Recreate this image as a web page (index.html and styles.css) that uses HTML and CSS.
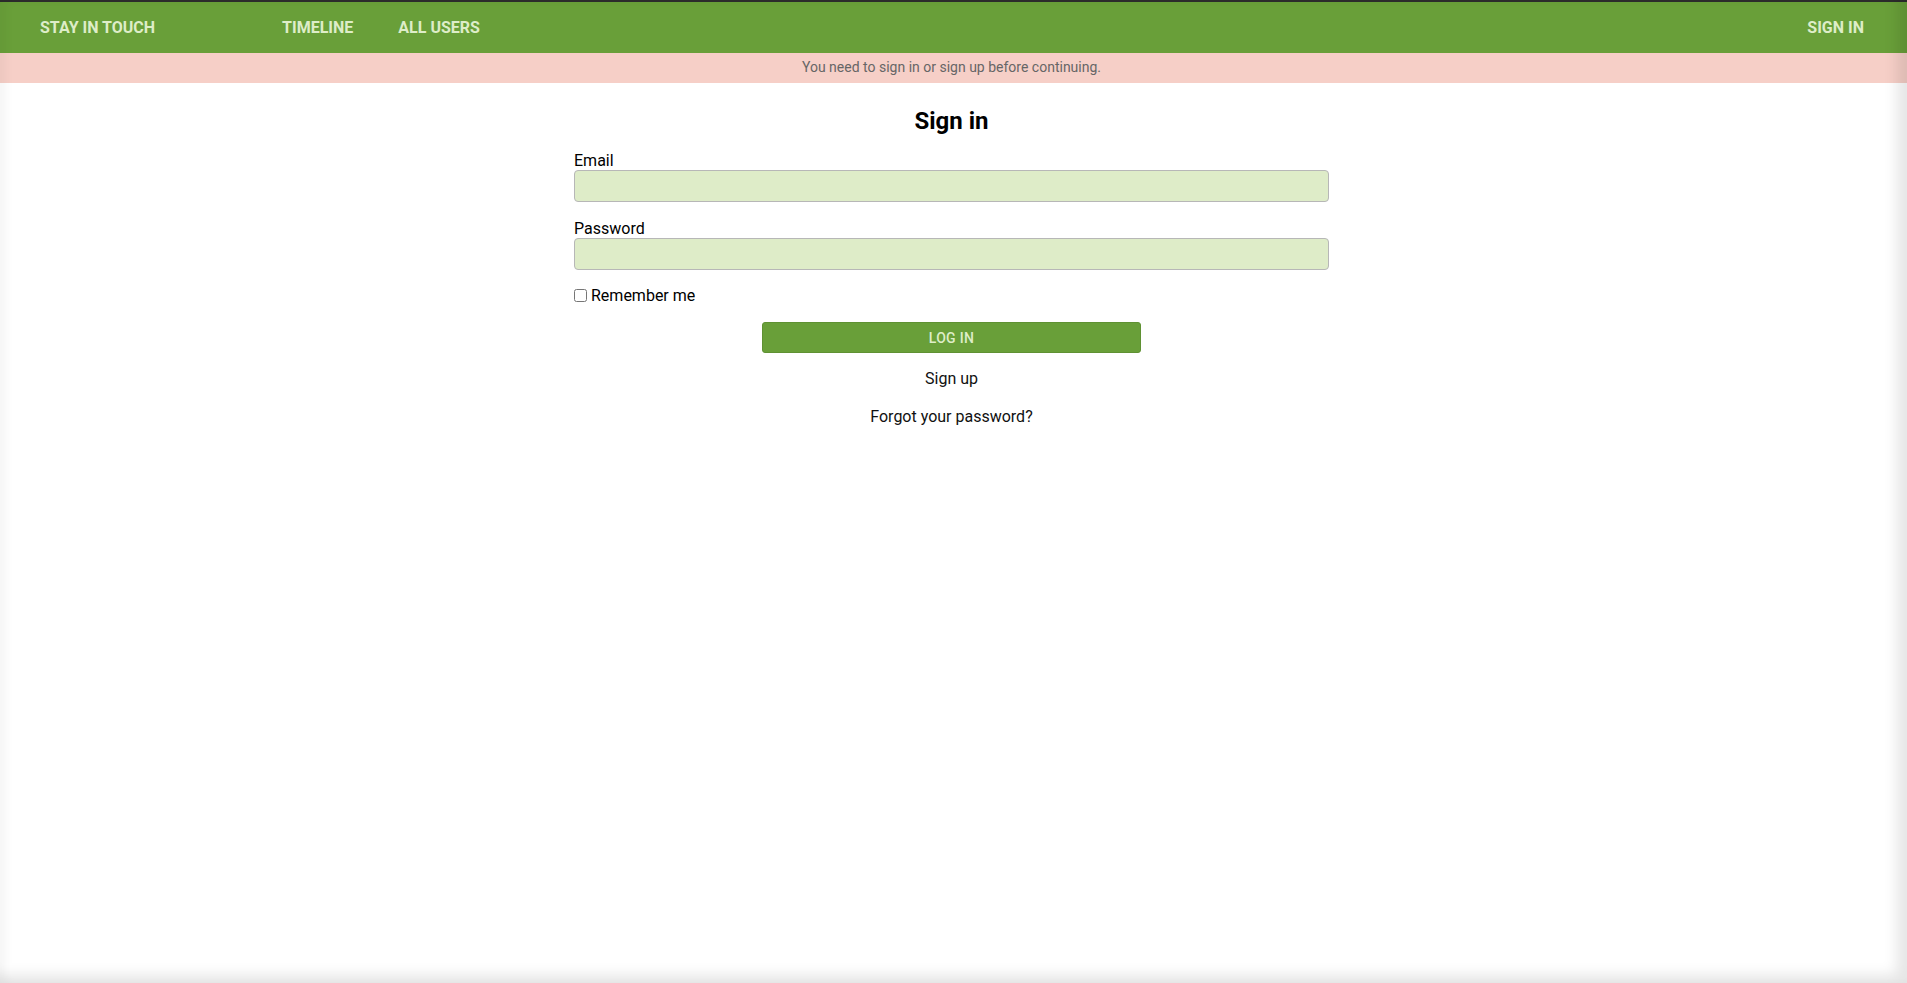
FILE: index.html
```html
<!DOCTYPE html>
<html lang="en">
<head>
<meta charset="utf-8">
<title>Stay in Touch - Sign in</title>
<link rel="stylesheet" href="styles.css">
</head>
<body>
<div class="page">
  <header class="topbar">
    <a class="brand" href="#">STAY IN TOUCH</a>
    <nav class="main-nav">
      <a href="#">TIMELINE</a>
      <a href="#">ALL USERS</a>
    </nav>
    <a class="signin-link" href="#">SIGN IN</a>
  </header>
  <div class="content">
    <div class="alert">You need to sign in or sign up before continuing.</div>
    <main class="auth">
      <h2 class="auth-title">Sign in</h2>
      <form class="auth-form">
        <div class="field">
          <label for="email">Email</label>
          <input id="email" type="email" class="text-input">
        </div>
        <div class="field">
          <label for="password">Password</label>
          <input id="password" type="password" class="text-input">
        </div>
        <div class="remember">
          <input id="remember" type="checkbox">
          <label for="remember">Remember me</label>
        </div>
        <div class="actions">
          <button type="button" class="btn">LOG IN</button>
        </div>
      </form>
      <div class="links">
        <a href="#">Sign up</a>
        <a href="#">Forgot your password?</a>
      </div>
    </main>
  </div>
</div>
<div class="edge-shadow"></div>
</body>
</html>
```

FILE: styles.css
```css
* { box-sizing: border-box; }

html, body {
  margin: 0;
  padding: 0;
  height: 100%;
}

body {
  font-family: Roboto, "Liberation Sans", Arial, sans-serif;
  color: #111;
  background: #fff;
  border-top: 2px solid #2c2c2c;
}

a { text-decoration: none; color: inherit; }

.topbar {
  height: 51px;
  background: #699f39;
  display: flex;
  align-items: center;
  padding: 0 43px 0 40px;
}

.topbar a {
  color: #deedc8;
  font-weight: 700;
  font-size: 16px;
}

.main-nav {
  display: flex;
  gap: 45px;
  margin-left: 127px;
  flex: 1;
}

.content {
  background: #fff;
}

.alert {
  height: 30px;
  background: #f6cfc7;
  color: #666;
  font-size: 14px;
  display: flex;
  align-items: center;
  justify-content: center;
  padding: 0 4px 3px 0;
}

.auth {
  width: 755px;
  margin: 0 auto;
  padding-top: 24px;
  position: relative;
  left: -2px;
}

.auth-title {
  margin: 0 0 16px;
  text-align: center;
  font-size: 24px;
  line-height: 28px;
  font-weight: 700;
  color: #000;
}

.field {
  display: flex;
  flex-direction: column;
  gap: 0;
  margin-bottom: 17px;
}

.field + .field {
  margin-bottom: 16px;
}

.field label {
  font-size: 16px;
  line-height: 19px;
  color: #000;
}

.text-input {
  height: 32px;
  width: 100%;
  background: #deecc8;
  border: 1px solid #b7b7b7;
  border-radius: 4px;
  font-size: 16px;
  padding: 0 8px;
}

.remember {
  display: flex;
  align-items: center;
  font-size: 16px;
  line-height: 19px;
  color: #000;
}

.remember input {
  margin: 0 4px 0 0;
  width: 13px;
  height: 13px;
}

.actions {
  display: flex;
  justify-content: center;
  margin-top: 17px;
}

.btn {
  width: 379px;
  height: 31px;
  background: #699f39;
  border: 1px solid #5f9133;
  border-radius: 3px;
  color: #deedc8;
  font-family: Roboto, "Liberation Sans", Arial, sans-serif;
  font-size: 14px;
  font-weight: 500;
  letter-spacing: 0.3px;
}

.links {
  display: flex;
  flex-direction: column;
  align-items: center;
  gap: 19px;
  margin-top: 16px;
  font-size: 16px;
  line-height: 19px;
  color: #111;
}

.edge-shadow {
  position: fixed;
  inset: 0;
  pointer-events: none;
  box-shadow: inset -10px -8px 14px rgba(0, 0, 0, 0.10), inset 6px 0 10px rgba(0, 0, 0, 0.04);
}
```
